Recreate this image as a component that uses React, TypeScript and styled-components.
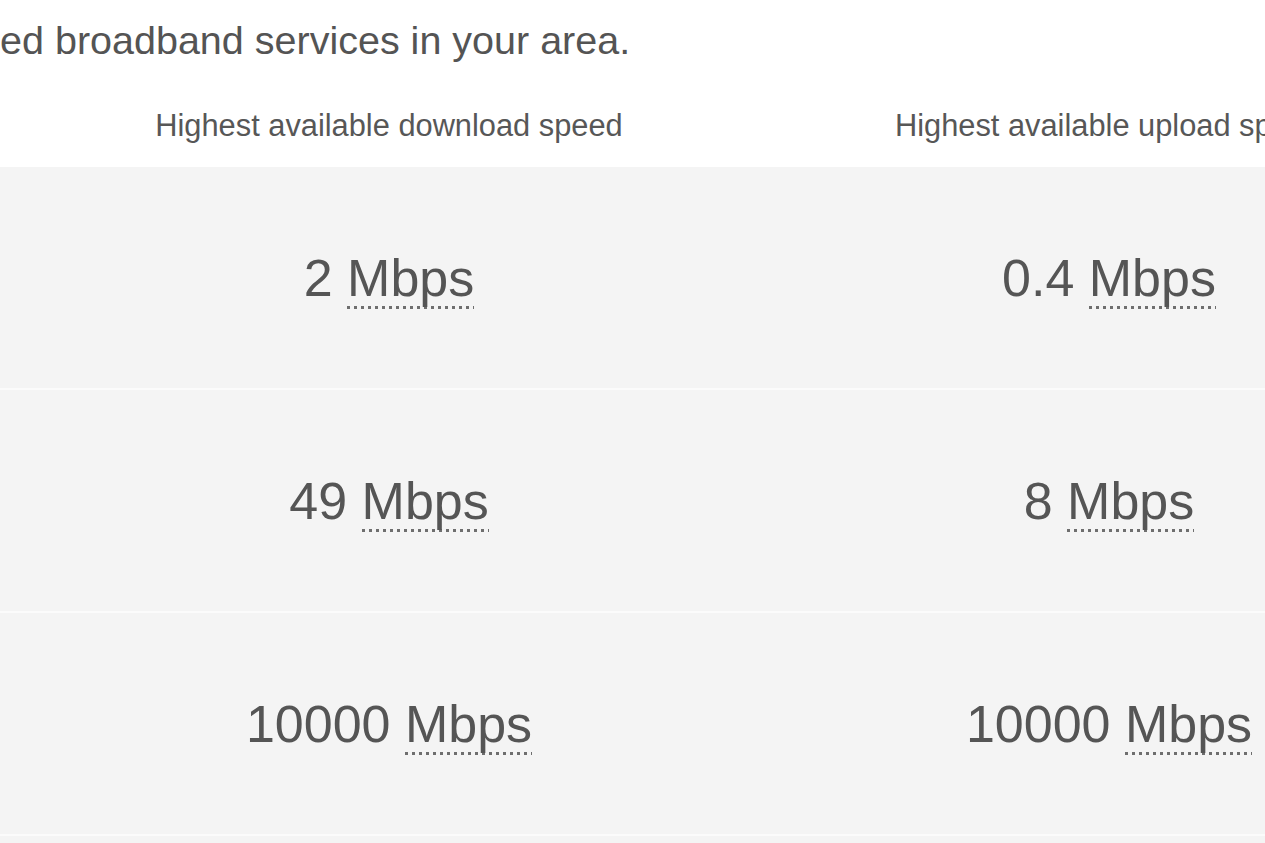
import React from 'react';
import styled, { createGlobalStyle } from 'styled-components';

const GlobalStyle = createGlobalStyle`
  html, body {
    margin: 0;
    padding: 0;
    background: #ffffff;
  }
  body {
    font-family: "Liberation Sans", Arial, sans-serif;
    color: #555555;
    overflow: hidden;
  }
`;

const Page = styled.div`
  width: 1265px;
  height: 843px;
  overflow: hidden;
`;

const Intro = styled.p`
  margin: 0;
  padding-top: 17px;
  font-size: 39.5px;
  line-height: 46px;
  color: #545454;
  white-space: nowrap;
`;

const Grid = styled.div`
  display: grid;
  grid-template-columns: 29px 720px 720px;
`;

const HeadRow = styled(Grid)`
  box-sizing: border-box;
  height: 104px;
  padding-bottom: 23px;
  align-items: end;
  background: #ffffff;
`;

const HeadCell = styled.div`
  font-size: 30.8px;
  text-align: center;
  white-space: nowrap;
  color: #575757;
`;

const Row = styled(Grid)`
  height: 221px;
  align-items: center;
  background: #f4f4f4;
  border-bottom: 2px solid #fbfbfb;
`;

const Value = styled.div`
  font-size: 52px;
  text-align: center;
  white-space: nowrap;
  color: #555555;
`;

const Unit = styled.abbr`
  text-decoration: none;
  padding-bottom: 2px;
  background-image: linear-gradient(to right, #6e6e6e 50%, transparent 50%);
  background-size: 7px 3px;
  background-repeat: repeat-x;
  background-position: left bottom;
`;

const speeds = [
  { down: '2', up: '0.4' },
  { down: '49', up: '8' },
  { down: '10000', up: '10000' },
];

const Speed = ({ value }: { value: string }) => (
  <Value>
    {value} <Unit title="Megabits per second">Mbps</Unit>
  </Value>
);

export default function App() {
  return (
    <Page>
      <GlobalStyle />
      <Intro>ed broadband services in your area.</Intro>
      <HeadRow>
        <div />
        <HeadCell>Highest available download speed</HeadCell>
        <HeadCell>Highest available upload speed</HeadCell>
      </HeadRow>
      {speeds.map((s, i) => (
        <Row key={i}>
          <div />
          <Speed value={s.down} />
          <Speed value={s.up} />
        </Row>
      ))}
      <Row />
    </Page>
  );
}
